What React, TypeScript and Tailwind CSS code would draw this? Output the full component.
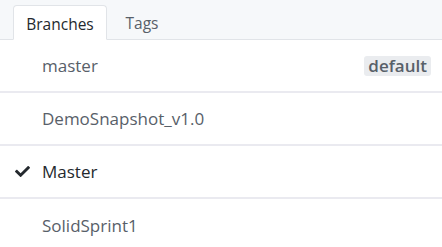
import { FaCheck } from "react-icons/fa";

const branches = [
  { name: "master", isDefault: true },
  { name: "DemoSnapshot_v1.0" },
  { name: "Master", current: true },
  { name: "SolidSprint1" },
];

export default function App() {
  return (
    <div
      className="w-[442px] h-[247px] bg-white overflow-hidden"
      style={{ fontFamily: '"Open Sans", "Noto Sans", sans-serif' }}
    >
      <div className="h-10 bg-[#f6f8fa] border-b border-[#e1e4e8] flex items-end pl-[13px]">
        <div className="h-[35px] w-[94px] -mb-px bg-white border border-[#e1e4e8] border-b-white rounded-t-[4px] flex items-center justify-center pt-[5px] text-[15.5px] text-[#24292e]">
          Branches
        </div>
        <div className="h-[35px] w-[70px] flex items-center justify-center pt-[5px] text-[15.5px] text-[#586069]">
          Tags
        </div>
      </div>
      {branches.map((b, i) => (
        <div
          key={b.name}
          className={`h-[53px] flex items-center pr-[11px] ${
            i < branches.length - 1 ? "border-b-2 border-[#eaeaf0]" : ""
          }`}
        >
          <div className="w-[42px] flex justify-center pl-[2px]">
            {b.current && <FaCheck className="text-[#24292e]" size={15} />}
          </div>
          <span
            className={`flex-1 text-[17px] ${
              b.current ? "text-[#24292e]" : "text-[#586069]"
            }`}
          >
            {b.name}
          </span>
          {b.isDefault && (
            <span className="h-5 px-[4px] rounded-[3px] bg-[#eaecef] text-[#586069] text-[17px] font-semibold leading-5">
              default
            </span>
          )}
        </div>
      ))}
    </div>
  );
}
